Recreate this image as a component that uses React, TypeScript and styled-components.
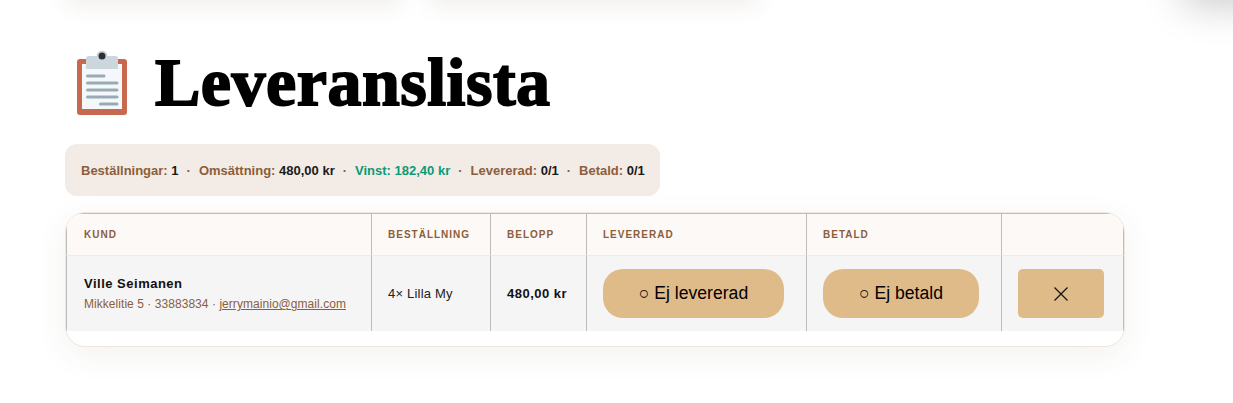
import React from "react";
import styled, { createGlobalStyle } from "styled-components";

const Global = createGlobalStyle`
  html, body { margin: 0; padding: 0; background: #fff; }
  body { height: 403px; overflow: hidden; font-family: "Liberation Sans", Arial, sans-serif; color: #000; }
`;

const Page = styled.div`
  padding: 0 0 0 65px;
  width: 1233px;
  height: 403px;
  box-sizing: border-box;
  overflow: hidden;
  position: relative;
`;

const TopCards = styled.div`
  display: flex;
  gap: 30px;
  height: 0;
  margin-left: 3px;
`;

const TopCard = styled.div<{ $w: number }>`
  width: ${(p) => p.$w}px;
  height: 40px;
  margin-top: -40px;
  flex: none;
  box-shadow: 0 4px 24px rgba(90, 70, 40, 0.1);
`;

const CornerShade = styled.div`
  position: absolute;
  top: -60px;
  right: -60px;
  width: 110px;
  height: 60px;
  box-shadow: 0 4px 40px rgba(0, 0, 0, 0.22);
`;

const TitleRow = styled.h1`
  margin: 0;
  padding-top: 20px;
  height: 144px;
  box-sizing: border-box;
  display: flex;
  align-items: center;
  gap: 24px;
  font-family: "Liberation Serif", "Times New Roman", serif;
  font-weight: 700;
  font-size: 68px;
  line-height: 1;
  letter-spacing: 0.5px;
  -webkit-text-stroke: 1.8px #000;
`;

const TitleIcon = styled.svg`
  width: 66px;
  height: 70px;
  flex: none;
  margin-top: 6px;
`;

const StatBar = styled.div`
  width: 595px;
  height: 52px;
  box-sizing: border-box;
  padding: 0 16px;
  display: flex;
  align-items: center;
  background: #f3ebe5;
  border-radius: 12px;
  font-size: 13px;
  font-weight: 700;
  color: #8b5e3c;
  white-space: pre;
`;

const Value = styled.span`
  color: #1a1a1a;
`;

const Profit = styled.span`
  color: #0a9a75;
`;

const Dot = styled.span`
  margin: 0 8px;
`;

const Card = styled.div`
  margin-top: 16px;
  width: 1060px;
  height: 135px;
  box-sizing: border-box;
  background: #fff;
  border-radius: 20px;
  border: 1px solid #efe7de;
  overflow: hidden;
  box-shadow: 0 8px 32px rgba(90, 70, 40, 0.07);
`;

const Table = styled.table`
  width: 1058px;
  table-layout: fixed;
  border-collapse: separate;
  border-spacing: 0;
`;

const Th = styled.th<{ $w: number }>`
  width: ${(p) => p.$w}px;
  height: 43px;
  box-sizing: border-box;
  padding: 0 16px;
  background: #fdf9f6;
  border-top: 1px solid #c4bdb6;
  border-left: 1px solid #bdbdbd;
  border-bottom: 1px solid #f1ebe5;
  text-align: left;
  font-size: 10px;
  font-weight: 700;
  letter-spacing: 1px;
  color: #8b5e3c;
  &:first-child { padding-left: 17px; }
  &:last-child { border-right: 1px solid #bdbdbd; }
`;

const Td = styled.td`
  height: 75px;
  box-sizing: border-box;
  padding: 0 16px;
  background: #f5f5f5;
  border-left: 1px solid #bdbdbd;
  font-size: 13px;
  letter-spacing: 0.2px;
  color: #222;
  &:first-child { padding-left: 17px; }
  &:last-child { border-right: 1px solid #bdbdbd; }
`;

const Name = styled.div`
  font-size: 13px;
  font-weight: 700;
  letter-spacing: 0.5px;
  color: #111;
  margin-bottom: 6px;
`;

const Meta = styled.div`
  font-size: 12px;
  letter-spacing: 0.05px;
  color: #8b5e3c;
  white-space: nowrap;
`;

const Mail = styled.a`
  color: #8b5e3c;
  text-decoration: underline;
`;

const Amount = styled.span`
  font-size: 13px;
  font-weight: 700;
  letter-spacing: 0.5px;
  color: #111;
`;

const Toggle = styled.button<{ $w: number }>`
  width: ${(p) => p.$w}px;
  height: 49px;
  display: block;
  border: 0;
  padding: 0;
  border-radius: 20px;
  background: #e0bb8a;
  font-family: "Liberation Sans", Arial, sans-serif;
  font-size: 17.6px;
  color: #000;
`;

const Remove = styled.button`
  width: 86px;
  height: 49px;
  display: flex;
  align-items: center;
  justify-content: center;
  border: 0;
  padding: 0;
  border-radius: 5px;
  background: #e0bb8a;
`;

const CloseIcon = styled.svg`
  width: 14px;
  height: 14px;
`;

const App = () => (
  <Page>
    <Global />
    <TopCards>
      <TopCard $w={332} />
      <TopCard $w={327} />
    </TopCards>
    <CornerShade />
    <TitleRow>
      <TitleIcon viewBox="0 0 66 70">
        <rect x="12" y="9" width="50" height="56" rx="3" fill="#c6694f" />
        <rect x="17" y="14" width="40" height="45" fill="#f5f8fa" />
        <path d="M21 9 a3 3 0 0 1 3 -3 h26 a3 3 0 0 1 3 3 v10 H21z" fill="#ccd6dd" />
        <circle cx="37" cy="6" r="5.5" fill="#ccd6dd" />
        <circle cx="37" cy="6" r="3.5" fill="#292f33" />
        <g stroke="#99aab5" strokeWidth="3" strokeLinecap="round">
          <path d="M22.5 26 H39" />
          <path d="M22.5 33 H52" />
          <path d="M22.5 40 H52" />
          <path d="M22.5 47 H52" />
          <path d="M35.500 54 H52" />
        </g>
      </TitleIcon>
      Leveranslista
    </TitleRow>
    <StatBar>
      Beställningar: <Value>1</Value>
      <Dot>·</Dot>
      Omsättning: <Value>480,00 kr</Value>
      <Dot>·</Dot>
      <Profit>Vinst: 182,40 kr</Profit>
      <Dot>·</Dot>
      Levererad: <Value>0/1</Value>
      <Dot>·</Dot>
      Betald: <Value>0/1</Value>
    </StatBar>
    <Card>
      <Table>
        <thead>
          <tr>
            <Th $w={305}>KUND</Th>
            <Th $w={119}>BESTÄLLNING</Th>
            <Th $w={96}>BELOPP</Th>
            <Th $w={220}>LEVERERAD</Th>
            <Th $w={195}>BETALD</Th>
            <Th $w={123}></Th>
          </tr>
        </thead>
        <tbody>
          <tr>
            <Td>
              <Name>Ville Seimanen</Name>
              <Meta>
                Mikkelitie 5 · 33883834 · <Mail href="#">jerrymainio@gmail.com</Mail>
              </Meta>
            </Td>
            <Td>4× Lilla My</Td>
            <Td><Amount>480,00 kr</Amount></Td>
            <Td><Toggle $w={181}>○ Ej levererad</Toggle></Td>
            <Td><Toggle $w={156}>○ Ej betald</Toggle></Td>
            <Td>
              <Remove aria-label="Ta bort">
                <CloseIcon viewBox="0 0 14 14">
                  <path d="M0.5 0.500 L13.500 13.500 M13.500 0.500 L0.500 13.500" stroke="#111" strokeWidth="1.2" fill="none" />
                </CloseIcon>
              </Remove>
            </Td>
          </tr>
        </tbody>
      </Table>
    </Card>
  </Page>
);

export default App;
